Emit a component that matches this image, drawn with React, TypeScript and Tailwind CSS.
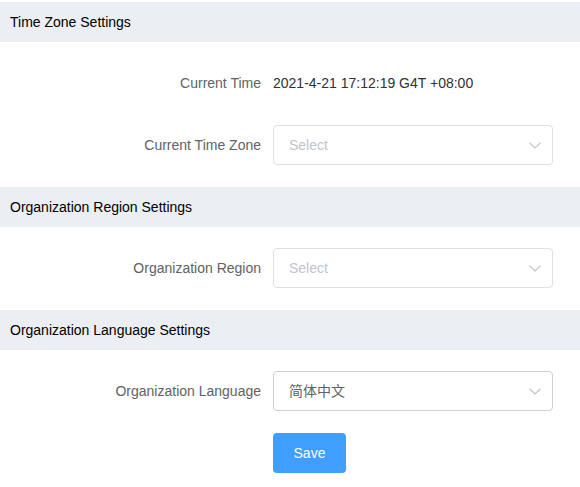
import React from "react";

const font = { fontFamily: '"Liberation Sans", Arial, "Noto Sans CJK SC", sans-serif' };

function Chevron() {
  return (
    <svg width="12" height="7" viewBox="0 0 12 7" className="absolute right-[11px] top-[16px]">
      <path d="M0.5 0.8 L6 6 L11.5 0.8" fill="none" stroke="#c0c4cc" strokeWidth="1.2" />
    </svg>
  );
}

function Select({ value }: { value?: string }) {
  return (
    <div
      className={
        value
          ? "relative w-[280px] h-10 border border-[#cdd0d6] rounded-[4px] bg-white flex items-center pl-[15px]"
          : "relative w-[280px] h-10 border border-[#dcdfe6] rounded-[4px] bg-white flex items-center pl-[15px]"
      }
    >
      <span className={value ? "text-[14px] text-[#606266]" : "text-[14px] text-[#c0c4cc]"}>{value ?? "Select"}</span>
      <Chevron />
    </div>
  );
}

function Header({ title }: { title: string }) {
  return (
    <div className="h-10 bg-[#ebeef3] flex items-center pl-[10px] text-[14px] text-[#000000]">{title}</div>
  );
}

function Row({ label, children }: { label: string; children: React.ReactNode }) {
  return (
    <div className="flex items-center h-10 mb-[22px]">
      <div className="w-[273px] pr-3 text-right text-[14px] text-[#606266]">{label}</div>
      {children}
    </div>
  );
}

export default function App() {
  return (
    <div className="w-[580px] h-[487px] bg-white pt-[2px]" style={font}>
      <Header title="Time Zone Settings" />
      <div className="pt-[21px]">
        <Row label="Current Time">
          <span className="text-[14px] text-[#303133]">2021-4-21 17:12:19 G4T +08:00</span>
        </Row>
        <Row label="Current Time Zone">
          <Select />
        </Row>
      </div>
      <Header title="Organization Region Settings" />
      <div className="pt-[21px]">
        <Row label="Organization Region">
          <Select />
        </Row>
      </div>
      <Header title="Organization Language Settings" />
      <div className="pt-[21px]">
        <Row label="Organization Language">
          <Select value="简体中文" />
        </Row>
        <div className="pl-[273px]">
          <button className="w-[73px] h-10 bg-[#409eff] rounded-[4px] text-white text-[14px] font-medium">Save</button>
        </div>
      </div>
    </div>
  );
}
